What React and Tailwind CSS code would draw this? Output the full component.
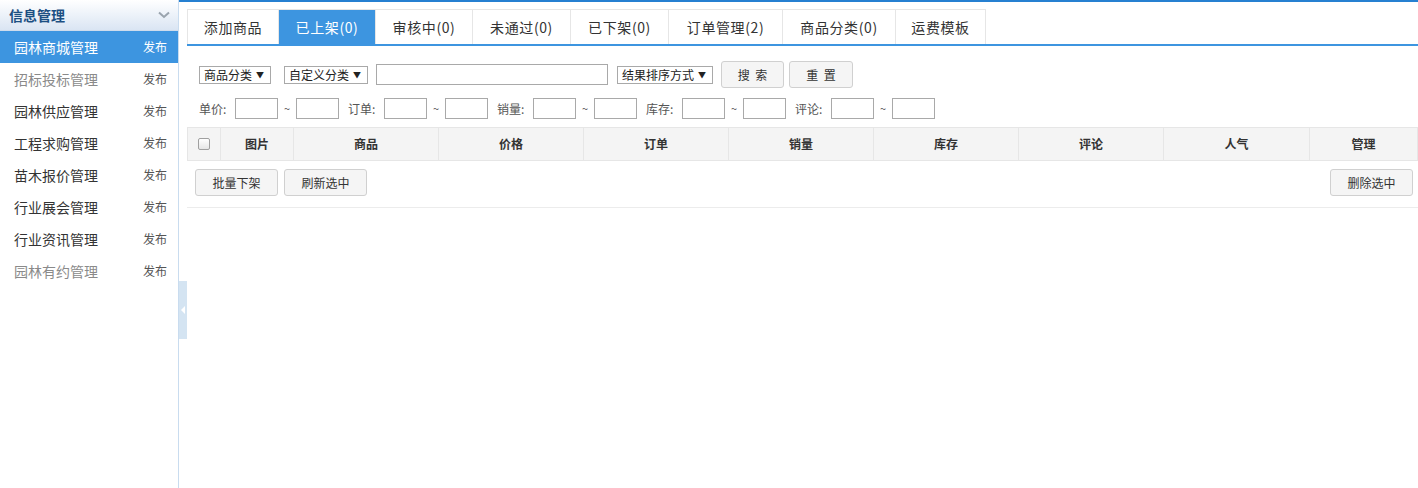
import React from "react";

const menu = [
  { name: "园林商城管理", active: true },
  { name: "招标投标管理", dim: true },
  { name: "园林供应管理" },
  { name: "工程求购管理" },
  { name: "苗木报价管理" },
  { name: "行业展会管理" },
  { name: "行业资讯管理" },
  { name: "园林有约管理", dim: true },
];

const tabs = [
  { label: "添加商品", w: "w-[92px]" },
  { label: "已上架(0)", w: "w-[97px]", active: true },
  { label: "审核中(0)", w: "w-[97px]" },
  { label: "未通过(0)", w: "w-[98px]" },
  { label: "已下架(0)", w: "w-[98px]" },
  { label: "订单管理(2)", w: "w-[114px]" },
  { label: "商品分类(0)", w: "w-[113px]" },
  { label: "运费模板", w: "w-[90px]" },
];

const cols = [
  { label: "", w: "w-[33px]" },
  { label: "图片", w: "w-[73px]" },
  { label: "商品", w: "w-[145px]" },
  { label: "价格", w: "w-[145px]" },
  { label: "订单", w: "w-[145px]" },
  { label: "销量", w: "w-[145px]" },
  { label: "库存", w: "w-[145px]" },
  { label: "评论", w: "w-[145px]" },
  { label: "人气", w: "w-[146px]" },
  { label: "管理", w: "" },
];

const ranges = ["单价", "订单", "销量", "库存", "评论"];

const Select = ({ label, w }) => (
  <div
    className={`h-[18px] ${w} border border-[#a9a9a9] bg-white flex items-center justify-between pl-[4px] pr-[6px] text-[12px] text-[#222]`}
  >
    <span>{label}</span>
    <span className="text-[8px]">▼</span>
  </div>
);

const Btn = ({ children, w = "w-[83px]" }) => (
  <button
    className={`${w} h-[27px] border border-[#d0d0d0] rounded-[3px] bg-[#f5f5f5] text-[12px] text-[#333] whitespace-pre`}
  >
    {children}
  </button>
);

const App = () => {
  return (
    <div
      className="flex h-[488px] w-[1418px] bg-white overflow-hidden"
      style={{ fontFamily: '"Noto Sans CJK SC", "Noto Sans", sans-serif' }}
    >
      {/* sidebar */}
      <div className="w-[179px] shrink-0 border-r border-[#c9dcef] flex flex-col">
        <div className="h-[31px] flex items-center justify-between pl-[9px] pr-[8px] bg-gradient-to-b from-white to-[#dae5f3] border-b border-[#cfdcec]">
          <span className="text-[14px] font-bold text-[#1c4f82]">信息管理</span>
          <svg width="12" height="8" viewBox="0 0 12 8">
            <path d="M1 1.5 L6 6 L11 1.5" fill="none" stroke="#9aa4ae" strokeWidth="2" />
          </svg>
        </div>
        {menu.map((m) => (
          <div
            key={m.name}
            className={`h-[32px] flex items-center justify-between pl-[14px] pr-[11px] ${
              m.active ? "bg-[#3d95e0] text-white" : ""
            }`}
          >
            <span
              className={`text-[14px] ${
                m.active ? "text-white" : m.dim ? "text-[#8a8a8a]" : "text-[#333]"
              }`}
            >
              {m.name}
            </span>
            <span className={`text-[12px] ${m.active ? "text-white" : "text-[#555]"}`}>
              发布
            </span>
          </div>
        ))}
      </div>

      {/* main */}
      <div className="flex-1 relative border-t-2 border-[#2680d1] pl-[8px] pt-[7px]">
        <div className="absolute left-0 top-[279px] w-[8px] h-[58px] bg-[#d4e4f2] flex items-center justify-center">
          <svg width="4" height="8" viewBox="0 0 4 8">
            <path d="M4 0 L0 4 L4 8 Z" fill="#fff" />
          </svg>
        </div>

        {/* tabs */}
        <div className="flex border-b-2 border-[#3d95e0] h-[37px]">
          {tabs.map((t) => (
            <div
              key={t.label}
              className={`${t.w} h-[35px] flex items-center justify-center text-[14px] tracking-[0.6px] border-t border-r border-[#e6e6e6] first:border-l ${
                t.active ? "bg-[#3d95e0] text-white border-[#3d95e0]" : "text-[#333]"
              }`}
            >
              {t.label}
            </div>
          ))}
        </div>

        {/* filters */}
        <div className="pl-[12px] pt-[15px]">
          <div className="flex items-center h-[27px]">
            <Select label="商品分类" w="w-[72px]" />
            <div className="w-[13px]" />
            <Select label="自定义分类" w="w-[84px]" />
            <div className="w-[8px]" />
            <div className="w-[232px] h-[21px] border border-[#a9a9a9]" />
            <div className="w-[9px]" />
            <Select label="结果排序方式" w="w-[96px]" />
            <div className="w-[8px]" />
            <Btn w="w-[63px]">搜  索</Btn>
            <div className="w-[5px]" />
            <Btn w="w-[64px]">重  置</Btn>
          </div>
          <div className="flex items-center h-[21px] mt-[10px] text-[12px] text-[#555]">
            {ranges.map((r) => (
              <div key={r} className="flex items-center mr-[9px]">
                <span className="w-[36px]">{r}:</span>
                <div className="w-[43px] h-[21px] border border-[#a9a9a9]" />
                <span className="w-[18px] text-center text-[11px]">~</span>
                <div className="w-[43px] h-[21px] border border-[#a9a9a9]" />
              </div>
            ))}
          </div>
        </div>

        {/* table */}
        <table className="table-fixed w-full mt-[8px] border-collapse">
          <thead>
            <tr className="h-[33px] bg-[#f4f4f4]">
              {cols.map((c, i) => (
                <th
                  key={i}
                  className={`${c.w} border border-[#e6e6e6] text-[12px] font-bold text-[#333]`}
                >
                  {i === 0 ? (
                    <div className="w-[12px] h-[12px] mx-auto border border-[#a0a0a0] rounded-[2px] bg-gradient-to-b from-white to-[#e6e6e6]" />
                  ) : (
                    c.label
                  )}
                </th>
              ))}
            </tr>
          </thead>
        </table>
        <div className="flex justify-between items-start pt-[8px] h-[47px] pl-[8px] pr-[5px] border-b border-[#ececec]">
          <div className="flex gap-[6px]">
            <Btn>批量下架</Btn>
            <Btn>刷新选中</Btn>
          </div>
          <Btn>删除选中</Btn>
        </div>
      </div>
    </div>
  );
};

export default App;
